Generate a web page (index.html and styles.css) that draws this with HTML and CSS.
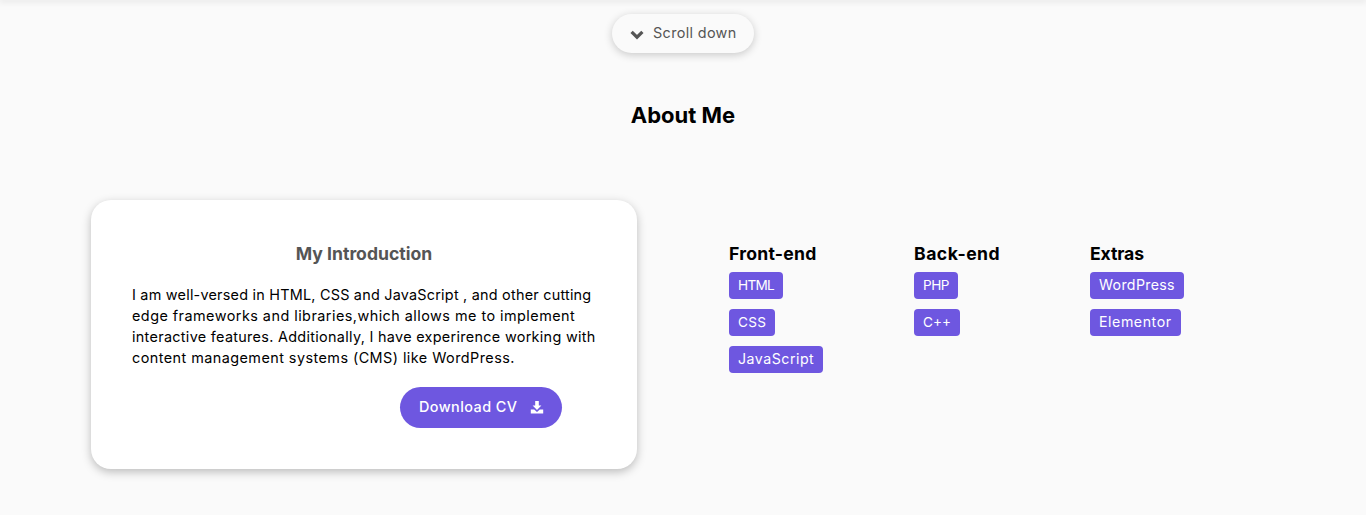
FILE: index.html
```html
<!DOCTYPE html>
<html lang="en">
<head>
<meta charset="utf-8">
<title>About Me</title>
<link rel="stylesheet" href="styles.css">
</head>
<body>
<div class="topbar"></div>
<div class="scroll-wrap">
  <a class="scroll-btn" href="#about">
    <svg class="chev" viewBox="0 0 14 10" width="14" height="10" aria-hidden="true"><path d="M1.6 1.8L7 7.2l5.4-5.4" fill="none" stroke="currentColor" stroke-width="3.2"/></svg>
    <span>Scroll down</span>
  </a>
</div>
<h2 class="title" id="about">About Me</h2>
<main class="about">
  <section class="card">
    <h3 class="card-title">My Introduction</h3>
    <p class="card-text">
      <span class="line l1">I am well-versed in HTML, CSS and JavaScript , and other cutting</span>
      <span class="line l2">edge frameworks and libraries,which allows me to implement</span>
      <span class="line l3">interactive features. Additionally, I have experirence working with</span>
      <span class="line l4">content management systems (CMS) like WordPress.</span>
    </p>
    <div class="card-actions">
      <a class="cv-btn" href="#cv">Download CV
        <svg class="dl" viewBox="0 0 14 14" width="14" height="14" aria-hidden="true"><path d="M5.2 1h3.6v4.6h2.6L7 10 2.6 5.6h2.6z" fill="currentColor"/><path d="M0.8 9.4h3.4L7 12l2.8-2.6h3.4V13.4H.8z" fill="currentColor"/></svg>
      </a>
    </div>
  </section>
  <section class="skills">
    <div class="col">
      <h4>Front-end</h4>
      <ul><li class="caps t-html">HTML</li><li class="caps t-css">CSS</li><li class="t-js">JavaScript</li></ul>
    </div>
    <div class="col">
      <h4 class="h-back">Back-end</h4>
      <ul><li class="caps t-php">PHP</li><li class="caps">C++</li></ul>
    </div>
    <div class="col">
      <h4 class="h-extra">Extras</h4>
      <ul><li class="t-wp">WordPress</li><li class="t-el">Elementor</li></ul>
    </div>
  </section>
</main>
</body>
</html>
```
FILE: styles.css
```css
* { box-sizing: border-box; }
html, body { margin: 0; padding: 0; }
body {
  background: #fafafa;
  color: #000;
  font-family: "Inter", "Open Sans", sans-serif;
  height: 515px;
  overflow: hidden;
}
.topbar {
  height: 0;
  box-shadow: 0 0 6px 1px rgba(0,0,0,.18);
}
.scroll-wrap {
  display: flex;
  justify-content: center;
  padding-top: 14px;
}
.scroll-btn {
  display: flex;
  align-items: center;
  gap: 9px;
  width: 142px;
  height: 39px;
  padding-left: 18px;
  padding-bottom: 2px;
  border-radius: 20px;
  background: #fafafa;
  color: #555;
  text-decoration: none;
  font-size: 14.4px;
  letter-spacing: .35px;
  box-shadow: 0 2px 8px rgba(0,0,0,.2);
}
.chev { margin-top: 5px; }
.title {
  margin: 49px 0 0;
  height: 27px;
  line-height: 27px;
  text-align: center;
  font-size: 22px;
  font-weight: 700;
}
.about {
  display: flex;
  padding: 71px 0 0 91px;
}
.card {
  width: 546px;
  height: 269px;
  padding: 41px 41px 0;
  border-radius: 20px;
  background: #fff;
  box-shadow: 0 3px 10px rgba(0,0,0,.25);
}
.card-title {
  margin: 0;
  height: 26px;
  line-height: 26px;
  text-align: center;
  font-size: 17.6px;
  font-weight: 700;
  color: #555;
}
.card-text {
  margin: 17px 0 0;
  font-size: 14.4px;
  line-height: 21px;
  white-space: nowrap;
}
.line { display: block; }
.l1 { letter-spacing: .23px; }
.l2 { letter-spacing: .47px; }
.l3 { letter-spacing: .31px; }
.l4 { letter-spacing: .45px; }
.card-actions {
  display: flex;
  padding: 19px 0 0 268px;
}
.cv-btn {
  display: flex;
  align-items: center;
  gap: 12px;
  width: 162px;
  height: 41px;
  padding-left: 19px;
  padding-bottom: 2px;
  border-radius: 21px;
  background: #6e57e0;
  color: #fff;
  text-decoration: none;
  font-size: 14.4px;
  font-weight: 500;
  letter-spacing: .45px;
}
.skills {
  display: grid;
  grid-template-columns: 185px 176px 120px;
  padding: 42px 0 0 92px;
}
.col h4 {
  margin: 0;
  height: 24px;
  line-height: 24px;
  font-size: 17.6px;
  font-weight: 700;
  letter-spacing: .25px;
}
.col .h-back { letter-spacing: .5px; }
.col .h-extra { letter-spacing: -.1px; }
.col ul {
  list-style: none;
  margin: 6px 0 0;
  padding: 0;
  display: flex;
  flex-direction: column;
  align-items: flex-start;
  gap: 10px;
}
.col li {
  height: 27px;
  line-height: 26px;
  padding: 0 9px;
  border-radius: 4px;
  background: #6e57e0;
  color: #fff;
  font-size: 14.2px;
}
.col .caps { font-size: 13.6px; }
.t-html { letter-spacing: -.7px; }
.t-css { letter-spacing: .3px; }
.t-php { letter-spacing: -.5px; }
.t-js { letter-spacing: .5px; }
.t-wp { letter-spacing: .33px; }
.t-el { letter-spacing: .55px; }
```
